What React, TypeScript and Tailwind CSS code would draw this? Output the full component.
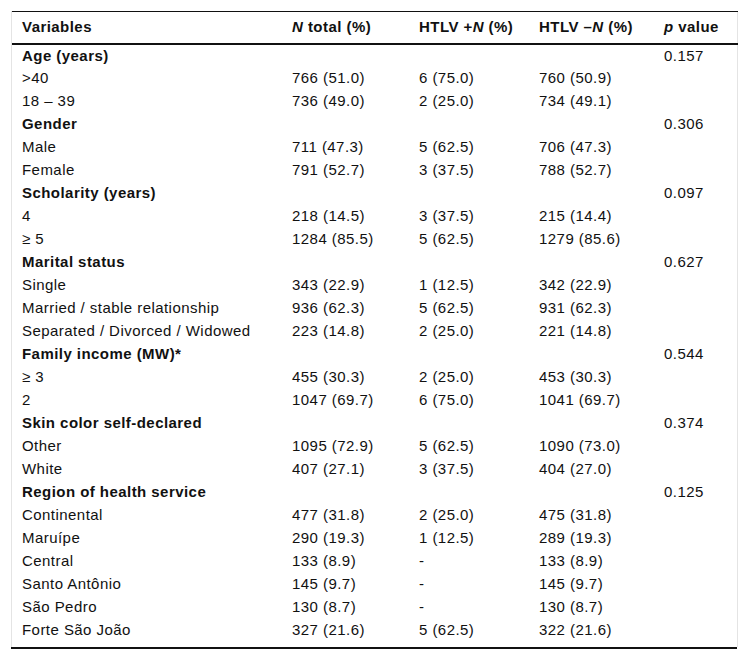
const rows: { label: string; group?: boolean; total?: string; pos?: string; neg?: string; p?: string }[] = [
  { label: 'Age (years)', group: true, p: '0.157' },
  { label: '>40', total: '766 (51.0)', pos: '6 (75.0)', neg: '760 (50.9)' },
  { label: '18 – 39', total: '736 (49.0)', pos: '2 (25.0)', neg: '734 (49.1)' },
  { label: 'Gender', group: true, p: '0.306' },
  { label: 'Male', total: '711 (47.3)', pos: '5 (62.5)', neg: '706 (47.3)' },
  { label: 'Female', total: '791 (52.7)', pos: '3 (37.5)', neg: '788 (52.7)' },
  { label: 'Scholarity (years)', group: true, p: '0.097' },
  { label: '4', total: '218 (14.5)', pos: '3 (37.5)', neg: '215 (14.4)' },
  { label: '≥ 5', total: '1284 (85.5)', pos: '5 (62.5)', neg: '1279 (85.6)' },
  { label: 'Marital status', group: true, p: '0.627' },
  { label: 'Single', total: '343 (22.9)', pos: '1 (12.5)', neg: '342 (22.9)' },
  { label: 'Married / stable relationship', total: '936 (62.3)', pos: '5 (62.5)', neg: '931 (62.3)' },
  { label: 'Separated / Divorced / Widowed', total: '223 (14.8)', pos: '2 (25.0)', neg: '221 (14.8)' },
  { label: 'Family income (MW)*', group: true, p: '0.544' },
  { label: '≥ 3', total: '455 (30.3)', pos: '2 (25.0)', neg: '453 (30.3)' },
  { label: '2', total: '1047 (69.7)', pos: '6 (75.0)', neg: '1041 (69.7)' },
  { label: 'Skin color self-declared', group: true, p: '0.374' },
  { label: 'Other', total: '1095 (72.9)', pos: '5 (62.5)', neg: '1090 (73.0)' },
  { label: 'White', total: '407 (27.1)', pos: '3 (37.5)', neg: '404 (27.0)' },
  { label: 'Region of health service', group: true, p: '0.125' },
  { label: 'Continental', total: '477 (31.8)', pos: '2 (25.0)', neg: '475 (31.8)' },
  { label: 'Maruípe', total: '290 (19.3)', pos: '1 (12.5)', neg: '289 (19.3)' },
  { label: 'Central', total: '133 (8.9)', pos: '-', neg: '133 (8.9)' },
  { label: 'Santo Antônio', total: '145 (9.7)', pos: '-', neg: '145 (9.7)' },
  { label: 'São Pedro', total: '130 (8.7)', pos: '-', neg: '130 (8.7)' },
  { label: 'Forte São João', total: '327 (21.6)', pos: '5 (62.5)', neg: '322 (21.6)' },
]

export default function App() {
  return (
    <div className="bg-white w-[749px] h-[660px] pt-[11px] pl-[11px] font-['Liberation_Sans',Arial,sans-serif] text-[15px] tracking-[0.45px] text-[#111]">
      <div className="w-[727px] border-x border-[#e4e4e4] pb-[5px]">
        <table className="w-[726px] border-collapse table-fixed">
          <colgroup>
            <col className="w-[270px]" />
            <col className="w-[127px]" />
            <col className="w-[120px]" />
            <col className="w-[125px]" />
            <col className="w-[84px]" />
          </colgroup>
          <thead>
            <tr className="h-[32px] border-t border-[#111] border-b-2 border-b-[#111]">
              <th className="text-left font-bold pl-[10px]">Variables</th>
              <th className="text-left font-bold pl-[10px]"><i>N</i> total (%)</th>
              <th className="text-left font-bold pl-[10px]">HTLV +<i>N</i> (%)</th>
              <th className="text-left font-bold pl-[10px]">HTLV –<i>N</i> (%)</th>
              <th className="text-left font-bold pl-[10px]"><i>p</i> value</th>
            </tr>
          </thead>
          <tbody>
            {rows.map((r, i) => (
              <tr key={i} className="h-[23px]">
                <td className={`pl-[10px] whitespace-nowrap ${r.group ? 'font-bold' : ''}`}>{r.label}</td>
                <td className="pl-[10px]">{r.total}</td>
                <td className="pl-[10px]">{r.pos}</td>
                <td className="pl-[10px]">{r.neg}</td>
                <td className="pl-[10px]">{r.p}</td>
              </tr>
            ))}
          </tbody>
        </table>
      </div>
      <div className="w-[726px] h-[2px] bg-[#111]" />
    </div>
  )
}
